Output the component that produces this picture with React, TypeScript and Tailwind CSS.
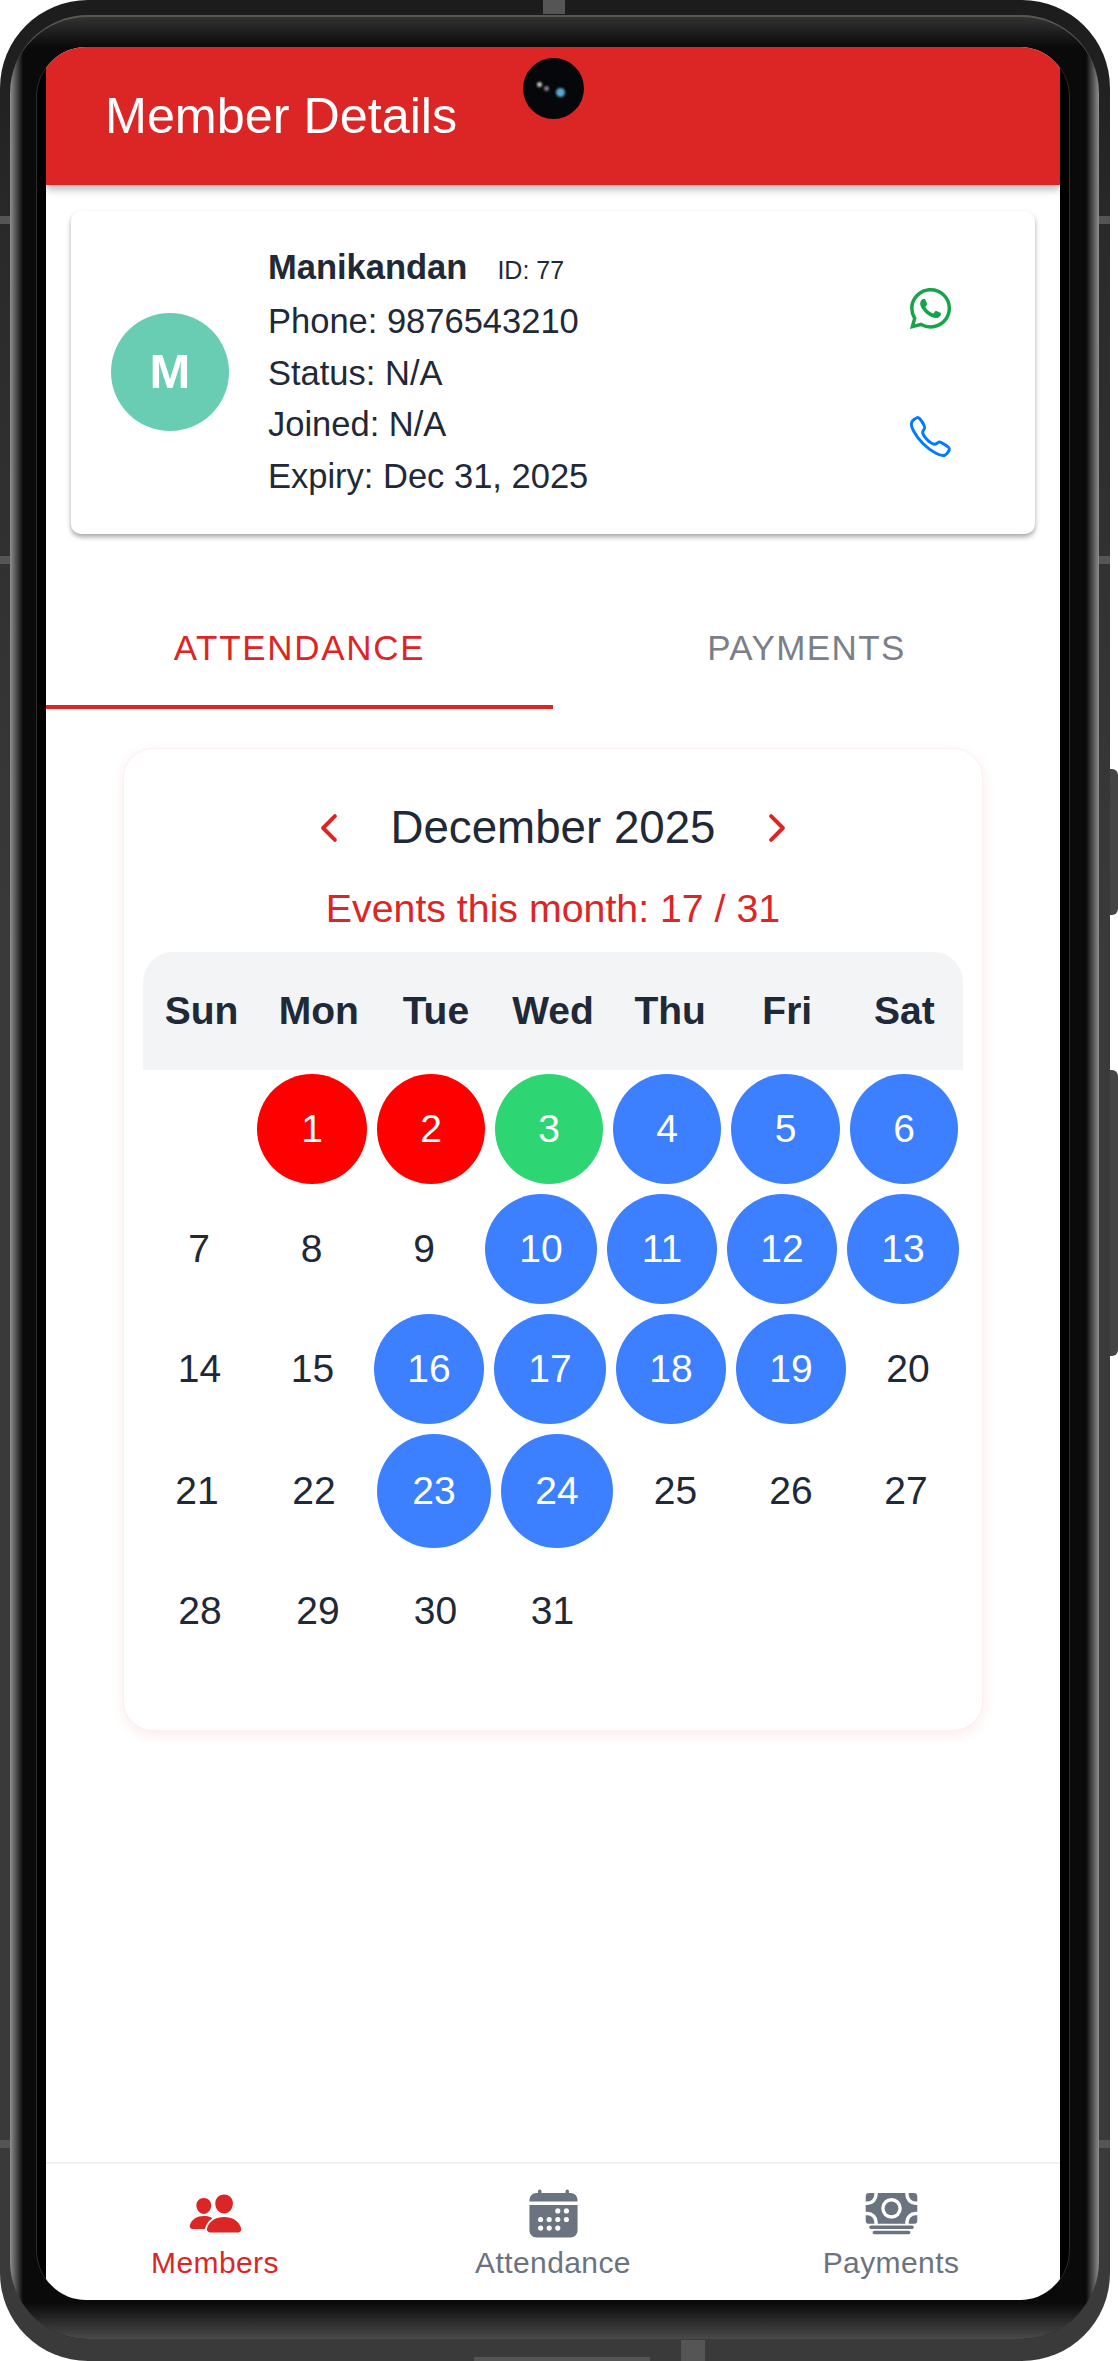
import { IoCalendar, IoCallOutline, IoCash, IoChevronBackOutline, IoChevronForwardOutline, IoLogoWhatsapp, IoPeople } from "react-icons/io5";

type Day = { label: string; width: string; color?: string };

const SANS = "font-['Liberation_Sans',Arial,sans-serif]";
const BLUE = "bg-[#3c80ff]";
const RED = "bg-[#ff0000]";
const GREEN = "bg-[#2ed573]";

const weekdays = ["Sun", "Mon", "Tue", "Wed", "Thu", "Fri", "Sat"];

const weeks: { row: string; days: Day[] }[] = [
  {
    row: "h-[110px] pl-[5px]",
    days: [
      { label: "", width: "w-[99px]" },
      { label: "1", width: "w-[110px]", color: RED },
      { label: "2", width: "w-[108px]", color: RED },
      { label: "3", width: "w-[108px]", color: GREEN },
      { label: "4", width: "w-[108px]", color: BLUE },
      { label: "5", width: "w-[109px]", color: BLUE },
      { label: "6", width: "w-[108px]", color: BLUE },
    ],
  },
  {
    row: "h-[110px] pl-[5px]",
    days: [
      { label: "7", width: "w-[102px]" },
      { label: "8", width: "w-[103px]" },
      { label: "9", width: "w-[102px]" },
      { label: "10", width: "w-[112px]", color: BLUE },
      { label: "11", width: "w-[110px]", color: BLUE },
      { label: "12", width: "w-[110px]", color: BLUE },
      { label: "13", width: "w-[112px]", color: BLUE },
    ],
  },
  {
    row: "h-[110px] pl-[5px]",
    days: [
      { label: "14", width: "w-[103px]" },
      { label: "15", width: "w-[103px]" },
      { label: "16", width: "w-[110px]", color: BLUE },
      { label: "17", width: "w-[112px]", color: BLUE },
      { label: "18", width: "w-[110px]", color: BLUE },
      { label: "19", width: "w-[110px]", color: BLUE },
      { label: "20", width: "w-[104px]" },
    ],
  },
  {
    row: "h-[114px]",
    days: [
      { label: "21", width: "w-[108px]" },
      { label: "22", width: "w-[106px]" },
      { label: "23", width: "w-[114px]", color: BLUE },
      { label: "24", width: "w-[112px]", color: BLUE },
      { label: "25", width: "w-[105px]" },
      { label: "26", width: "w-[106px]" },
      { label: "27", width: "w-[104px]" },
    ],
  },
  {
    row: "h-[106px] pl-[5px]",
    days: [
      { label: "28", width: "w-[104px]" },
      { label: "29", width: "w-[112px]" },
      { label: "30", width: "w-[103px]" },
      { label: "31", width: "w-[111px]" },
    ],
  },
];

function MemberCard() {
  return (
    <div className="mx-[25px] mt-[26px] flex h-[323px] items-center rounded-[10px] bg-white pl-[40px] pr-[81px] shadow-[0_3px_5px_rgba(0,0,0,0.35)]">
      <div className="mb-[1px] flex h-[118px] w-[118px] shrink-0 items-center justify-center rounded-full bg-[#69cdb3] text-[49px] font-bold text-white">
        M
      </div>
      <div className="ml-[39px] flex-1 text-[34.5px] leading-[51.5px] text-[#1f2937]">
        <div className="flex h-[53px] items-baseline leading-[48px]">
          <span className="font-bold">Manikandan</span>
          <span className="ml-[30px] text-[25px]">ID: 77</span>
        </div>
        <div>Phone: 9876543210</div>
        <div>Status: N/A</div>
        <div>Joined: N/A</div>
        <div>Expiry: Dec 31, 2025</div>
      </div>
      <div className="flex flex-col items-center gap-[81px]">
        <IoLogoWhatsapp className="h-[47px] w-[47px] text-[#16a34a]" />
        <IoCallOutline className="h-[47px] w-[47px] text-[#007aff]" />
      </div>
    </div>
  );
}

function Tabs() {
  return (
    <div className="mt-[88px] flex h-[87px] text-[35px]">
      <div className="flex-1 border-b-4 border-[#dc2626] text-center tracking-[1.7px] text-[#dc2626]">ATTENDANCE</div>
      <div className="flex-1 text-center tracking-[1.4px] text-[#7b8088]">PAYMENTS</div>
    </div>
  );
}

function Calendar() {
  return (
    <div className="mx-[77px] mt-[39px] h-[983px] rounded-[30px] border border-[#fdf0f0] bg-white px-[19px] shadow-[0_4px_14px_rgba(220,38,38,0.09)]">
      <div className="mt-[53px] flex items-center justify-center text-[45.7px] leading-[52px] text-[#1f2937]">
        <IoChevronBackOutline className="h-[42px] w-[42px] text-[#dc2626]" />
        <span className="mx-[40px]">December 2025</span>
        <IoChevronForwardOutline className="h-[42px] w-[42px] text-[#dc2626]" />
      </div>
      <div className="mt-[28px] text-center text-[39.3px] leading-[52px] text-[#dc2626]">Events this month: 17 / 31</div>
      <div className="mt-[18px] flex h-[118px] items-center rounded-t-[30px] bg-[#f3f4f6] text-center text-[39px] font-bold text-[#1f2937]">
        {weekdays.map((name) => (
          <div key={name} className="flex-1">
            {name}
          </div>
        ))}
      </div>
      <div className="mt-[4px] flex flex-col gap-[10px]">
        {weeks.map((week, i) => (
          <div key={i} className={`flex gap-[10px] ${week.row}`}>
            {week.days.map((day, j) => (
              <div
                key={j}
                className={`flex h-full items-center justify-center rounded-[50%] text-[39px] ${day.width} ${
                  day.color ? `${day.color} text-white` : "text-[#1f2937]"
                }`}
              >
                {day.label}
              </div>
            ))}
          </div>
        ))}
      </div>
    </div>
  );
}

function BottomNav() {
  const items = [
    { label: "Members", Icon: IoPeople, color: "text-[#dc2626]" },
    { label: "Attendance", Icon: IoCalendar, color: "text-[#6b7280]" },
    { label: "Payments", Icon: IoCash, color: "text-[#6b7280]" },
  ];
  return (
    <div className="flex h-[138px] shrink-0 border-t-2 border-[#f0f0f0] pt-[22px]">
      {items.map(({ label, Icon, color }) => (
        <div key={label} className={`flex flex-1 flex-col items-center ${color}`}>
          <Icon className="h-[55px] w-[55px]" />
          <span className="mt-[4px] text-[30px] leading-[36px] tracking-[0.4px]">{label}</span>
        </div>
      ))}
    </div>
  );
}

export default function App() {
  return (
    <div className={`relative h-[2361px] w-[1118px] bg-white ${SANS}`}>
      {/* volume and power keys */}
      <div className="absolute right-0 top-[769px] h-[146px] w-[9px] rounded-r-[6px] bg-[#454545]" />
      <div className="absolute right-0 top-[1070px] h-[286px] w-[9px] rounded-r-[6px] bg-[#454545]" />

      <div className="relative h-full w-[1110px] rounded-[88px] bg-[linear-gradient(to_bottom,#1c1c1c,#2a2a2a_10%,#3a3a3a_40%)] pb-[22px] pl-[10px] pr-[11px] pt-[15px]">
        {/* antenna bands */}
        <div className="absolute left-[543px] top-0 h-[14px] w-[22px] bg-[#555555]" />
        <div className="absolute bottom-0 left-[474px] h-[4px] w-[176px] bg-[#555555]" />
        <div className="absolute bottom-0 left-[681px] h-[21px] w-[24px] bg-[#555555]" />
        <div className="absolute left-0 top-[216px] h-[8px] w-[10px] bg-[#555555]" />
        <div className="absolute left-0 top-[556px] h-[8px] w-[10px] bg-[#555555]" />
        <div className="absolute left-0 top-[2140px] h-[8px] w-[10px] bg-[#555555]" />
        <div className="absolute right-0 top-[216px] h-[8px] w-[11px] bg-[#555555]" />
        <div className="absolute right-0 top-[556px] h-[8px] w-[11px] bg-[#555555]" />
        <div className="absolute right-0 top-[2140px] h-[8px] w-[11px] bg-[#555555]" />

        <div className="relative h-full rounded-[78px] border-t-2 border-[#5a5650] bg-[linear-gradient(to_bottom,#333333,transparent_30px),linear-gradient(to_top,#4a4a4a,transparent_36px),linear-gradient(to_right,#8f8f8f,#0a0a0a_13px,#0a0a0a_calc(100%-13px),#8f8f8f)] pl-[26px] pr-[29px] pt-[30px]">
          <div className="h-[2253px] overflow-hidden rounded-[50px] border-x border-[#2e2e2e] bg-black px-[9px]">
            <div className="flex h-full flex-col bg-white">
              <div className="relative flex h-[138px] shrink-0 items-center bg-[#dc2626] pl-[59px] text-[50.3px] text-white shadow-[0_4px_8px_rgba(0,0,0,0.3)]">
                <span>Member Details</span>
                <div className="absolute left-[477px] top-[11px] h-[61px] w-[61px] overflow-hidden rounded-full bg-[#06070a]">
                  <div className="absolute left-[14px] top-[24px] h-[5px] w-[5px] rounded-full bg-[#c8c8c0] blur-[1px]" />
                  <div className="absolute left-[21px] top-[28px] h-[5px] w-[5px] rounded-full bg-[#8a7f95] blur-[1px]" />
                  <div className="absolute left-[33px] top-[30px] h-[9px] w-[9px] rounded-full bg-[#58a8d0] blur-[1px]" />
                </div>
              </div>
              <MemberCard />
              <Tabs />
              <Calendar />
              <div className="flex-1" />
              <BottomNav />
            </div>
          </div>
        </div>
      </div>
    </div>
  );
}
